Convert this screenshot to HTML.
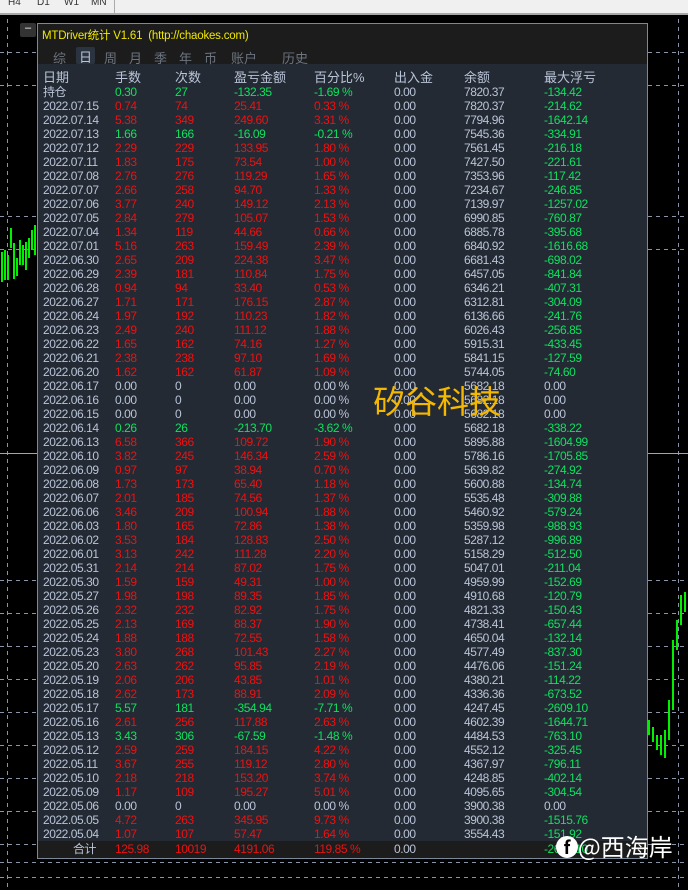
<!DOCTYPE html>
<html><head><meta charset="utf-8"><style>
*{margin:0;padding:0;box-sizing:border-box}
body{width:688px;height:890px;overflow:hidden;background:#000;font-family:"Liberation Sans","Noto Sans CJK SC",sans-serif;position:relative}
.top{position:absolute;left:0;top:0;width:688px;height:15px;background:#f0f0f0;border-bottom:2px solid #a8a8a8;font-size:10px;color:#333}
.top span{position:absolute;top:-3px}
.hl{position:absolute;left:0;width:688px;height:1px;background:repeating-linear-gradient(90deg,#8894a8 0 4px,transparent 4px 8px)}
.vl{position:absolute;top:19px;height:871px;width:1px;background:repeating-linear-gradient(180deg,#8894a8 0 4px,transparent 4px 8px)}
.bar{position:absolute;width:2px;background:#00f000}
.panel{position:absolute;left:37px;top:23px;width:611px;height:836px;background:#242a33;border:1px solid #7c8798}
.head{position:absolute;left:0;top:0;width:609px;height:40px;background:#1c1c1c}
.title{position:absolute;left:4px;top:3px;font-size:11.5px;color:#f0e800;letter-spacing:-0.2px}
.tabs{position:absolute;left:0;top:24px;font-size:13px;color:#6c7480}
.tabs span{position:absolute;top:0;white-space:nowrap}
.tabs .on{background:#2c3340;color:#b8c4d8;padding:0 3px;border-radius:2px;top:-1px;height:17px}
.rows{position:absolute;left:0;top:47px;width:609px}
.r{position:relative;height:14px;font-size:12px;line-height:14px;letter-spacing:-0.45px;white-space:nowrap}
.r span{position:absolute;top:0}
.r span:nth-child(1){left:5px;color:#b9c4d8}
.r span:nth-child(2){left:77px}
.r span:nth-child(3){left:137px}
.r span:nth-child(4){left:196px}
.r span:nth-child(5){left:276px}
.r span:nth-child(6){left:356px;color:#b9c4d8}
.r span:nth-child(7){left:426px;color:#b9c4d8}
.r span:nth-child(8){left:506px;color:#10e060}
.hd span{color:#b9c4d8!important;font-size:13px;letter-spacing:0}
.R span:nth-child(2),.R span:nth-child(3),.R span:nth-child(4),.R span:nth-child(5){color:#ee1111}
.G span:nth-child(2),.G span:nth-child(3),.G span:nth-child(4),.G span:nth-child(5){color:#10e060}
.Z span{color:#b9c4d8!important}
.foot{position:absolute;left:0;bottom:0;width:609px;height:17px;background:#1c1c1c}
.foot .r{top:1px}
.wm{position:absolute;left:373px;top:380px;font-size:32px;color:#f5b800;font-family:"Noto Sans CJK SC",sans-serif;line-height:40px}
.logo{position:absolute;left:556px;top:830px;font-size:24px;color:#fff;font-family:"Noto Sans CJK SC",sans-serif;line-height:32px}
</style></head><body>
<div class="top"><span style="left:8px">H4</span><span style="left:37px">D1</span><span style="left:64px">W1</span><span style="left:91px">MN</span><div style="position:absolute;left:114px;top:0;width:1px;height:15px;background:#aaa"></div></div>
<div class="vl" style="left:7px"></div><div class="vl" style="left:678px"></div>
<div class="hl" style="top:52px"></div><div class="hl" style="top:85px"></div><div class="hl" style="top:216px"></div><div class="hl" style="top:249px"></div>
<div class="hl" style="top:580px"></div><div class="hl" style="top:613px"></div><div class="hl" style="top:646px"></div><div class="hl" style="top:679px"></div><div class="hl" style="top:712px"></div><div class="hl" style="top:745px"></div><div class="hl" style="top:778px"></div><div class="hl" style="top:811px"></div><div class="hl" style="top:844px"></div><div class="hl" style="top:862px"></div><div class="hl" style="top:877px"></div>
<div style="position:absolute;left:0;top:453px;width:688px;height:1px;background:#9aa"></div>
<div class="bar" style="left:1px;top:252px;height:30px"></div><div class="bar" style="left:4px;top:250px;height:30px"></div><div class="bar" style="left:7px;top:255px;height:25px"></div><div class="bar" style="left:10px;top:228px;height:20px"></div><div class="bar" style="left:13px;top:243px;height:36px"></div><div class="bar" style="left:16px;top:258px;height:18px"></div><div class="bar" style="left:19px;top:240px;height:25px"></div><div class="bar" style="left:22px;top:245px;height:20px"></div><div class="bar" style="left:25px;top:242px;height:28px"></div><div class="bar" style="left:28px;top:238px;height:20px"></div><div class="bar" style="left:31px;top:230px;height:20px"></div><div class="bar" style="left:34px;top:225px;height:30px"></div>
<div class="bar" style="left:648px;top:720px;height:15px"></div><div class="bar" style="left:652px;top:727px;height:15px"></div><div class="bar" style="left:656px;top:735px;height:15px"></div><div class="bar" style="left:660px;top:735px;height:20px"></div><div class="bar" style="left:664px;top:730px;height:28px"></div><div class="bar" style="left:668px;top:700px;height:40px"></div><div class="bar" style="left:672px;top:640px;height:70px"></div><div class="bar" style="left:676px;top:620px;height:30px"></div><div class="bar" style="left:680px;top:595px;height:30px"></div><div class="bar" style="left:684px;top:592px;height:20px"></div>
<div style="position:absolute;left:20px;top:23px;width:16px;height:14px;background:#333;border-radius:2px;color:#fff;font-size:11px;text-align:center;line-height:10px">–</div>
<div class="panel">
<div class="head"><div class="title">MTDriver统计 V1.61 &nbsp;(http://chaokes.com)</div>
<div class="tabs"><span style="left:15px">综</span><span class="on" style="left:38px">日</span><span style="left:66px">周</span><span style="left:91px">月</span><span style="left:116px">季</span><span style="left:141px">年</span><span style="left:166px">币</span><span style="left:193px">账户</span><span style="left:244px">历史</span></div></div>
<div class="rows">
<div class="r hd"><span>日期</span><span>手数</span><span>次数</span><span>盈亏金额</span><span>百分比%</span><span>出入金</span><span>余额</span><span>最大浮亏</span></div>
<div class="r G"><span>持仓</span><span>0.30</span><span>27</span><span>-132.35</span><span>-1.69 %</span><span>0.00</span><span>7820.37</span><span>-134.42</span></div>
<div class="r R"><span>2022.07.15</span><span>0.74</span><span>74</span><span>25.41</span><span>0.33 %</span><span>0.00</span><span>7820.37</span><span>-214.62</span></div>
<div class="r R"><span>2022.07.14</span><span>5.38</span><span>349</span><span>249.60</span><span>3.31 %</span><span>0.00</span><span>7794.96</span><span>-1642.14</span></div>
<div class="r G"><span>2022.07.13</span><span>1.66</span><span>166</span><span>-16.09</span><span>-0.21 %</span><span>0.00</span><span>7545.36</span><span>-334.91</span></div>
<div class="r R"><span>2022.07.12</span><span>2.29</span><span>229</span><span>133.95</span><span>1.80 %</span><span>0.00</span><span>7561.45</span><span>-216.18</span></div>
<div class="r R"><span>2022.07.11</span><span>1.83</span><span>175</span><span>73.54</span><span>1.00 %</span><span>0.00</span><span>7427.50</span><span>-221.61</span></div>
<div class="r R"><span>2022.07.08</span><span>2.76</span><span>276</span><span>119.29</span><span>1.65 %</span><span>0.00</span><span>7353.96</span><span>-117.42</span></div>
<div class="r R"><span>2022.07.07</span><span>2.66</span><span>258</span><span>94.70</span><span>1.33 %</span><span>0.00</span><span>7234.67</span><span>-246.85</span></div>
<div class="r R"><span>2022.07.06</span><span>3.77</span><span>240</span><span>149.12</span><span>2.13 %</span><span>0.00</span><span>7139.97</span><span>-1257.02</span></div>
<div class="r R"><span>2022.07.05</span><span>2.84</span><span>279</span><span>105.07</span><span>1.53 %</span><span>0.00</span><span>6990.85</span><span>-760.87</span></div>
<div class="r R"><span>2022.07.04</span><span>1.34</span><span>119</span><span>44.66</span><span>0.66 %</span><span>0.00</span><span>6885.78</span><span>-395.68</span></div>
<div class="r R"><span>2022.07.01</span><span>5.16</span><span>263</span><span>159.49</span><span>2.39 %</span><span>0.00</span><span>6840.92</span><span>-1616.68</span></div>
<div class="r R"><span>2022.06.30</span><span>2.65</span><span>209</span><span>224.38</span><span>3.47 %</span><span>0.00</span><span>6681.43</span><span>-698.02</span></div>
<div class="r R"><span>2022.06.29</span><span>2.39</span><span>181</span><span>110.84</span><span>1.75 %</span><span>0.00</span><span>6457.05</span><span>-841.84</span></div>
<div class="r R"><span>2022.06.28</span><span>0.94</span><span>94</span><span>33.40</span><span>0.53 %</span><span>0.00</span><span>6346.21</span><span>-407.31</span></div>
<div class="r R"><span>2022.06.27</span><span>1.71</span><span>171</span><span>176.15</span><span>2.87 %</span><span>0.00</span><span>6312.81</span><span>-304.09</span></div>
<div class="r R"><span>2022.06.24</span><span>1.97</span><span>192</span><span>110.23</span><span>1.82 %</span><span>0.00</span><span>6136.66</span><span>-241.76</span></div>
<div class="r R"><span>2022.06.23</span><span>2.49</span><span>240</span><span>111.12</span><span>1.88 %</span><span>0.00</span><span>6026.43</span><span>-256.85</span></div>
<div class="r R"><span>2022.06.22</span><span>1.65</span><span>162</span><span>74.16</span><span>1.27 %</span><span>0.00</span><span>5915.31</span><span>-433.45</span></div>
<div class="r R"><span>2022.06.21</span><span>2.38</span><span>238</span><span>97.10</span><span>1.69 %</span><span>0.00</span><span>5841.15</span><span>-127.59</span></div>
<div class="r R"><span>2022.06.20</span><span>1.62</span><span>162</span><span>61.87</span><span>1.09 %</span><span>0.00</span><span>5744.05</span><span>-74.60</span></div>
<div class="r Z"><span>2022.06.17</span><span>0.00</span><span>0</span><span>0.00</span><span>0.00 %</span><span>0.00</span><span>5682.18</span><span>0.00</span></div>
<div class="r Z"><span>2022.06.16</span><span>0.00</span><span>0</span><span>0.00</span><span>0.00 %</span><span>0.00</span><span>5682.18</span><span>0.00</span></div>
<div class="r Z"><span>2022.06.15</span><span>0.00</span><span>0</span><span>0.00</span><span>0.00 %</span><span>0.00</span><span>5682.18</span><span>0.00</span></div>
<div class="r G"><span>2022.06.14</span><span>0.26</span><span>26</span><span>-213.70</span><span>-3.62 %</span><span>0.00</span><span>5682.18</span><span>-338.22</span></div>
<div class="r R"><span>2022.06.13</span><span>6.58</span><span>366</span><span>109.72</span><span>1.90 %</span><span>0.00</span><span>5895.88</span><span>-1604.99</span></div>
<div class="r R"><span>2022.06.10</span><span>3.82</span><span>245</span><span>146.34</span><span>2.59 %</span><span>0.00</span><span>5786.16</span><span>-1705.85</span></div>
<div class="r R"><span>2022.06.09</span><span>0.97</span><span>97</span><span>38.94</span><span>0.70 %</span><span>0.00</span><span>5639.82</span><span>-274.92</span></div>
<div class="r R"><span>2022.06.08</span><span>1.73</span><span>173</span><span>65.40</span><span>1.18 %</span><span>0.00</span><span>5600.88</span><span>-134.74</span></div>
<div class="r R"><span>2022.06.07</span><span>2.01</span><span>185</span><span>74.56</span><span>1.37 %</span><span>0.00</span><span>5535.48</span><span>-309.88</span></div>
<div class="r R"><span>2022.06.06</span><span>3.46</span><span>209</span><span>100.94</span><span>1.88 %</span><span>0.00</span><span>5460.92</span><span>-579.24</span></div>
<div class="r R"><span>2022.06.03</span><span>1.80</span><span>165</span><span>72.86</span><span>1.38 %</span><span>0.00</span><span>5359.98</span><span>-988.93</span></div>
<div class="r R"><span>2022.06.02</span><span>3.53</span><span>184</span><span>128.83</span><span>2.50 %</span><span>0.00</span><span>5287.12</span><span>-996.89</span></div>
<div class="r R"><span>2022.06.01</span><span>3.13</span><span>242</span><span>111.28</span><span>2.20 %</span><span>0.00</span><span>5158.29</span><span>-512.50</span></div>
<div class="r R"><span>2022.05.31</span><span>2.14</span><span>214</span><span>87.02</span><span>1.75 %</span><span>0.00</span><span>5047.01</span><span>-211.04</span></div>
<div class="r R"><span>2022.05.30</span><span>1.59</span><span>159</span><span>49.31</span><span>1.00 %</span><span>0.00</span><span>4959.99</span><span>-152.69</span></div>
<div class="r R"><span>2022.05.27</span><span>1.98</span><span>198</span><span>89.35</span><span>1.85 %</span><span>0.00</span><span>4910.68</span><span>-120.79</span></div>
<div class="r R"><span>2022.05.26</span><span>2.32</span><span>232</span><span>82.92</span><span>1.75 %</span><span>0.00</span><span>4821.33</span><span>-150.43</span></div>
<div class="r R"><span>2022.05.25</span><span>2.13</span><span>169</span><span>88.37</span><span>1.90 %</span><span>0.00</span><span>4738.41</span><span>-657.44</span></div>
<div class="r R"><span>2022.05.24</span><span>1.88</span><span>188</span><span>72.55</span><span>1.58 %</span><span>0.00</span><span>4650.04</span><span>-132.14</span></div>
<div class="r R"><span>2022.05.23</span><span>3.80</span><span>268</span><span>101.43</span><span>2.27 %</span><span>0.00</span><span>4577.49</span><span>-837.30</span></div>
<div class="r R"><span>2022.05.20</span><span>2.63</span><span>262</span><span>95.85</span><span>2.19 %</span><span>0.00</span><span>4476.06</span><span>-151.24</span></div>
<div class="r R"><span>2022.05.19</span><span>2.06</span><span>206</span><span>43.85</span><span>1.01 %</span><span>0.00</span><span>4380.21</span><span>-114.22</span></div>
<div class="r R"><span>2022.05.18</span><span>2.62</span><span>173</span><span>88.91</span><span>2.09 %</span><span>0.00</span><span>4336.36</span><span>-673.52</span></div>
<div class="r G"><span>2022.05.17</span><span>5.57</span><span>181</span><span>-354.94</span><span>-7.71 %</span><span>0.00</span><span>4247.45</span><span>-2609.10</span></div>
<div class="r R"><span>2022.05.16</span><span>2.61</span><span>256</span><span>117.88</span><span>2.63 %</span><span>0.00</span><span>4602.39</span><span>-1644.71</span></div>
<div class="r G"><span>2022.05.13</span><span>3.43</span><span>306</span><span>-67.59</span><span>-1.48 %</span><span>0.00</span><span>4484.53</span><span>-763.10</span></div>
<div class="r R"><span>2022.05.12</span><span>2.59</span><span>259</span><span>184.15</span><span>4.22 %</span><span>0.00</span><span>4552.12</span><span>-325.45</span></div>
<div class="r R"><span>2022.05.11</span><span>3.67</span><span>255</span><span>119.12</span><span>2.80 %</span><span>0.00</span><span>4367.97</span><span>-796.11</span></div>
<div class="r R"><span>2022.05.10</span><span>2.18</span><span>218</span><span>153.20</span><span>3.74 %</span><span>0.00</span><span>4248.85</span><span>-402.14</span></div>
<div class="r R"><span>2022.05.09</span><span>1.17</span><span>109</span><span>195.27</span><span>5.01 %</span><span>0.00</span><span>4095.65</span><span>-304.54</span></div>
<div class="r Z"><span>2022.05.06</span><span>0.00</span><span>0</span><span>0.00</span><span>0.00 %</span><span>0.00</span><span>3900.38</span><span>0.00</span></div>
<div class="r R"><span>2022.05.05</span><span>4.72</span><span>263</span><span>345.95</span><span>9.73 %</span><span>0.00</span><span>3900.38</span><span>-1515.76</span></div>
<div class="r R"><span>2022.05.04</span><span>1.07</span><span>107</span><span>57.47</span><span>1.64 %</span><span>0.00</span><span>3554.43</span><span>-151.92</span></div>
</div>
<div class="foot"><div class="r R"><span style="left:35px">合计</span><span>125.98</span><span>10019</span><span>4191.06</span><span>119.85 %</span><span>0.00</span><span></span><span>-2609.10</span></div></div>
</div>
<div class="wm">矽谷科技</div>
<div class="logo"><span style="display:inline-block;width:22px;height:22px;border-radius:50%;background:#fff;color:#000;font-size:18px;line-height:22px;text-align:center;font-weight:bold;vertical-align:2px">f</span>@西海岸</div>
</body></html>
